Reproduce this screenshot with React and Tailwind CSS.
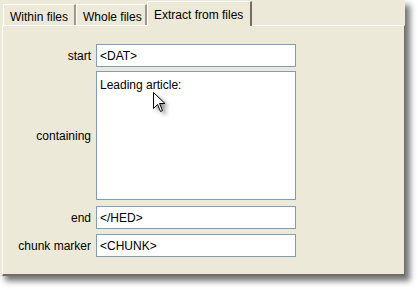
import React from "react";

const FONT = { fontFamily: '"Liberation Sans", Arial, sans-serif' };

function Tab({ label, active, width }) {
  if (active) {
    return (
      <div className={"relative z-10 -mb-px flex h-[25px] items-start border-l border-t border-r-2 border-l-white border-t-white border-r-[#716f64] bg-[#ece9d8] pl-[6px] pt-[4px] text-[12px] text-black " + width}>
        {label}
      </div>
    );
  }
  return (
    <div className={"flex h-[21px] items-start border-l border-t border-r-2 border-l-white border-t-white border-r-[#9d9a8c] bg-[#ece9d8] pl-[6px] pt-[3px] text-[12px] text-black " + width}>
      {label}
    </div>
  );
}

function Field({ label, value, tall, className = "" }) {
  return (
    <div className={"flex items-center " + className}>
      <div className="w-[88px] shrink-0 text-right text-[12px] text-black">{label}</div>
      <div
        className={
          "ml-[5px] w-[200px] border border-[#7f9db9] bg-white px-[3px] text-[12px] text-black " +
          (tall ? "h-[129px] pt-[4px]" : "flex h-[23px] items-center")
        }
      >
        {value}
      </div>
    </div>
  );
}

function Cursor() {
  return (
    <svg className="absolute left-[152px] top-[91px]" width="22" height="26" viewBox="0 0 22 26">
      <defs>
        <filter id="cs" x="-50%" y="-50%" width="200%" height="200%">
          <feGaussianBlur stdDeviation="2" />
        </filter>
      </defs>
      <path d="M4.5 4.5 L4.5 20.5 L8.5 16.5 L11.5 23.5 L14.5 22.5 L11.5 15.5 L16.5 15.5 Z" fill="rgba(0,0,0,0.45)" filter="url(#cs)" />
      <path d="M1.5 1.5 L1.5 17.5 L5.5 13.5 L8.5 20.5 L10.5 19.5 L7.5 12.5 L13 12.5 Z" fill="white" stroke="black" strokeWidth="1" strokeLinejoin="miter" />
    </svg>
  );
}

export default function App() {
  return (
    <div className="h-[290px] w-[420px] bg-white" style={FONT}>
      <div className="relative flex h-[276px] w-[405px] flex-col bg-[#ece9d8] shadow-[5px_5px_6px_rgba(0,0,0,0.55)]">
        {/* Tabs */}
        <div className="flex h-[25px] items-end pl-[3px]">
          <Tab label="Within files" width="w-[73px]" />
          <Tab label="Whole files" width="w-[71px]" />
          <Tab label="Extract from files" width="w-[105px]" active />
        </div>

        {/* Panel */}
        <div className="ml-[2px] flex flex-1 flex-col border-l border-t border-r border-b-2 border-l-white border-t-white border-r-[#716f64] border-b-[#716f64] pt-[18px]">
          <Field label="start" value="<DAT>" />
          <Field label="containing" value="Leading article:" tall className="mt-[4px]" />
          <Field label="end" value="</HED>" className="mt-[6px]" />
          <Field label="chunk marker" value="<CHUNK>" className="mt-[5px]" />
        </div>

        <Cursor />
      </div>
    </div>
  );
}
